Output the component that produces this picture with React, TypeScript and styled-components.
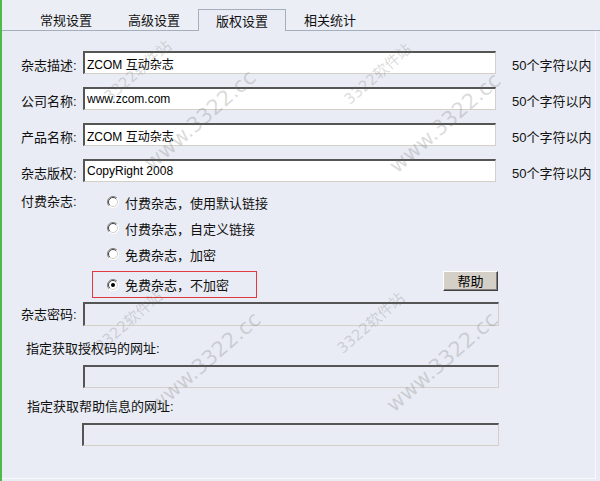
import { Fragment } from 'react';
import styled, { createGlobalStyle, css } from 'styled-components';

const GlobalStyle = createGlobalStyle`
  html, body {
    margin: 0;
    padding: 0;
    background: #e9ecf4;
  }
  body {
    font-family: "Liberation Sans", "Noto Sans CJK SC", sans-serif;
    font-size: 13px;
    color: #111;
  }
`;

const Frame = styled.div`
  position: relative;
  width: 600px;
  height: 481px;
  box-sizing: border-box;
  border-left: 2px solid #4dbb4a;
  display: flex;
  flex-direction: column;
  overflow: hidden;
`;

const TabBar = styled.div`
  height: 31px;
  box-sizing: border-box;
  display: flex;
  align-items: flex-end;
  padding-left: 20px;
  border-bottom: 1px solid #a5afbb;
  background: #eceef5;
`;

const Tab = styled.div<{ $active?: boolean }>`
  width: 88px;
  height: 22px;
  box-sizing: border-box;
  margin-bottom: -1px;
  display: flex;
  align-items: center;
  justify-content: center;
  font-size: 13px;
  line-height: 17px;
  ${p => p.$active && css`
    border: 1px solid #a5afbb;
    border-bottom: none;
    background: #e9ecf4;
    padding-top: 1px;
  `}
`;

const Panel = styled.div`
  flex: 1;
  width: 594px;
  box-sizing: border-box;
  margin-bottom: 2px;
  border-right: 1px solid #f7f8fb;
  border-bottom: 1px solid #f7f8fb;
  padding: 20px 0 0 19px;
  display: flex;
  flex-direction: column;
`;

const FieldGrid = styled.div`
  display: grid;
  grid-template-columns: 62px 413px auto;
  row-gap: 13px;
  align-items: start;
`;

const Label = styled.div<{ $pad?: number }>`
  font-size: 13px;
  line-height: 17px;
  padding-top: ${p => p.$pad ?? 6}px;
  white-space: nowrap;
`;

const Hint = styled(Label)`
  padding-left: 16px;
`;

const TextBox = styled.input<{ $width?: number; $height?: number }>`
  display: block;
  width: ${p => (p.$width ? `${p.$width}px` : '100%')};
  height: ${p => p.$height ?? 23}px;
  box-sizing: border-box;
  margin: 0;
  padding: 0 2px;
  font-family: "Liberation Sans", "Noto Sans CJK SC", sans-serif;
  font-size: 12px;
  color: #000;
  background: #fff;
  border-style: solid;
  border-width: 2px 1px 1px 2px;
  border-color: #555 #d4d0c8 #d4d0c8 #555;
  outline: none;
  &:disabled {
    background: #e9ecf4;
  }
`;

const ChoiceGrid = styled.div`
  display: grid;
  grid-template-columns: 62px 415px;
  margin-top: 7px;
`;

const ChoiceLabel = styled.div`
  font-size: 13px;
  line-height: 26px;
  white-space: nowrap;
`;

const Options = styled.div`
  display: flex;
  flex-direction: column;
  padding-left: 9px;
`;

const Option = styled.label`
  display: flex;
  align-items: center;
  gap: 6px;
  height: 26px;
  padding-left: 15px;
  font-size: 13px;
  white-space: nowrap;
`;

const LastRow = styled.div`
  display: flex;
  justify-content: space-between;
  align-items: flex-start;
  margin-top: 4px;
`;

const Highlight = styled.div`
  width: 165px;
  height: 27px;
  box-sizing: border-box;
  border: 1px solid #e0393e;
  display: flex;

  ${Option} {
    height: 25px;
    padding-left: 14px;
  }
`;

const HelpButton = styled.button`
  width: 55px;
  height: 20px;
  padding: 0;
  box-sizing: border-box;
  background: #d4d0c8;
  font-family: "Noto Sans CJK SC", sans-serif;
  font-size: 13px;
  line-height: 16px;
  color: #000;
  border: 1px solid;
  border-color: #fff #404040 #404040 #fff;
  box-shadow: inset -1px -1px #808080;
`;

const PasswordRow = styled.div`
  display: grid;
  grid-template-columns: 62px 416px;
  align-items: center;
  margin-top: 4px;
`;

const Caption = styled.div<{ $top: number; $left: number }>`
  font-size: 13px;
  line-height: 17px;
  margin-top: ${p => p.$top}px;
  padding-left: ${p => p.$left}px;
  white-space: nowrap;
`;

const UrlBox = styled(TextBox)<{ $left: number }>`
  margin-top: 8px;
  margin-left: ${p => p.$left}px;
`;

const Watermarks = styled.div`
  position: absolute;
  inset: 0;
  pointer-events: none;
`;

const Mark = styled.span<{ $x: number; $y: number; $size: number }>`
  position: absolute;
  left: ${p => p.$x - 2}px;
  top: ${p => p.$y}px;
  transform: translate(-50%, -50%) rotate(-41deg);
  font-family: "DejaVu Sans", "Noto Sans CJK SC", sans-serif;
  font-size: ${p => p.$size}px;
  color: rgba(110, 110, 110, 0.25);
  white-space: nowrap;
`;

function Radio({ checked }: { checked?: boolean }) {
  return (
    <svg width="12" height="12" viewBox="0 0 12 12">
      <circle cx="6" cy="6" r="5.5" fill="#fff" />
      <path d="M2.1 9.9 A5.5 5.5 0 0 1 9.9 2.1" stroke="#808080" fill="none" />
      <path d="M2.8 9.2 A4.5 4.5 0 0 1 9.2 2.8" stroke="#404040" fill="none" />
      <path d="M9.9 2.1 A5.5 5.5 0 0 1 2.1 9.9" stroke="#ffffff" fill="none" />
      <path d="M9.2 2.8 A4.5 4.5 0 0 1 2.8 9.2" stroke="#d4d0c8" fill="none" />
      {checked && <circle cx="6" cy="6" r="2" fill="#000" />}
    </svg>
  );
}

const tabs = ['常规设置', '高级设置', '版权设置', '相关统计'];

const fields = [
  { label: '杂志描述:', value: 'ZCOM 互动杂志' },
  { label: '公司名称:', value: 'www.zcom.com' },
  { label: '产品名称:', value: 'ZCOM 互动杂志' },
  { label: '杂志版权:', value: 'CopyRight 2008' },
];

const marks = [
  { text: '3322软件站', x: 137, y: 70, size: 15 },
  { text: 'www.3322.cc', x: 200, y: 120, size: 21 },
  { text: '3322软件站', x: 377, y: 73, size: 15 },
  { text: 'www.3322.cc', x: 445, y: 123, size: 21 },
  { text: '3322软件站', x: 128, y: 320, size: 15 },
  { text: 'www.3322.cc', x: 205, y: 362, size: 21 },
  { text: '3322软件站', x: 370, y: 322, size: 15 },
  { text: 'www.3322.cc', x: 442, y: 362, size: 21 },
];

export default function App() {
  return (
    <Frame>
      <GlobalStyle />
      <TabBar>
        {tabs.map((t, i) => (
          <Tab key={t} $active={i === 2}>{t}</Tab>
        ))}
      </TabBar>
      <Panel>
        <FieldGrid>
          {fields.map(f => (
            <Fragment key={f.label}>
              <Label>{f.label}</Label>
              <TextBox defaultValue={f.value} />
              <Hint>50个字符以内</Hint>
            </Fragment>
          ))}
        </FieldGrid>

        <ChoiceGrid>
          <ChoiceLabel>付费杂志:</ChoiceLabel>
          <Options>
            <Option><Radio />付费杂志，使用默认链接</Option>
            <Option><Radio />付费杂志，自定义链接</Option>
            <Option><Radio />免费杂志，加密</Option>
            <LastRow>
              <Highlight>
                <Option><Radio checked />免费杂志，不加密</Option>
              </Highlight>
              <HelpButton>帮助</HelpButton>
            </LastRow>
          </Options>
        </ChoiceGrid>

        <PasswordRow>
          <Label $pad={0}>杂志密码:</Label>
          <TextBox disabled $height={24} />
        </PasswordRow>

        <Caption $top={14} $left={5}>指定获取授权码的网址:</Caption>
        <UrlBox disabled $left={62} $width={416} />

        <Caption $top={10} $left={6}>指定获取帮助信息的网址:</Caption>
        <UrlBox disabled $left={61} $width={417} />
      </Panel>
      <Watermarks>
        {marks.map((m, i) => (
          <Mark key={i} $x={m.x} $y={m.y} $size={m.size}>{m.text}</Mark>
        ))}
      </Watermarks>
    </Frame>
  );
}
